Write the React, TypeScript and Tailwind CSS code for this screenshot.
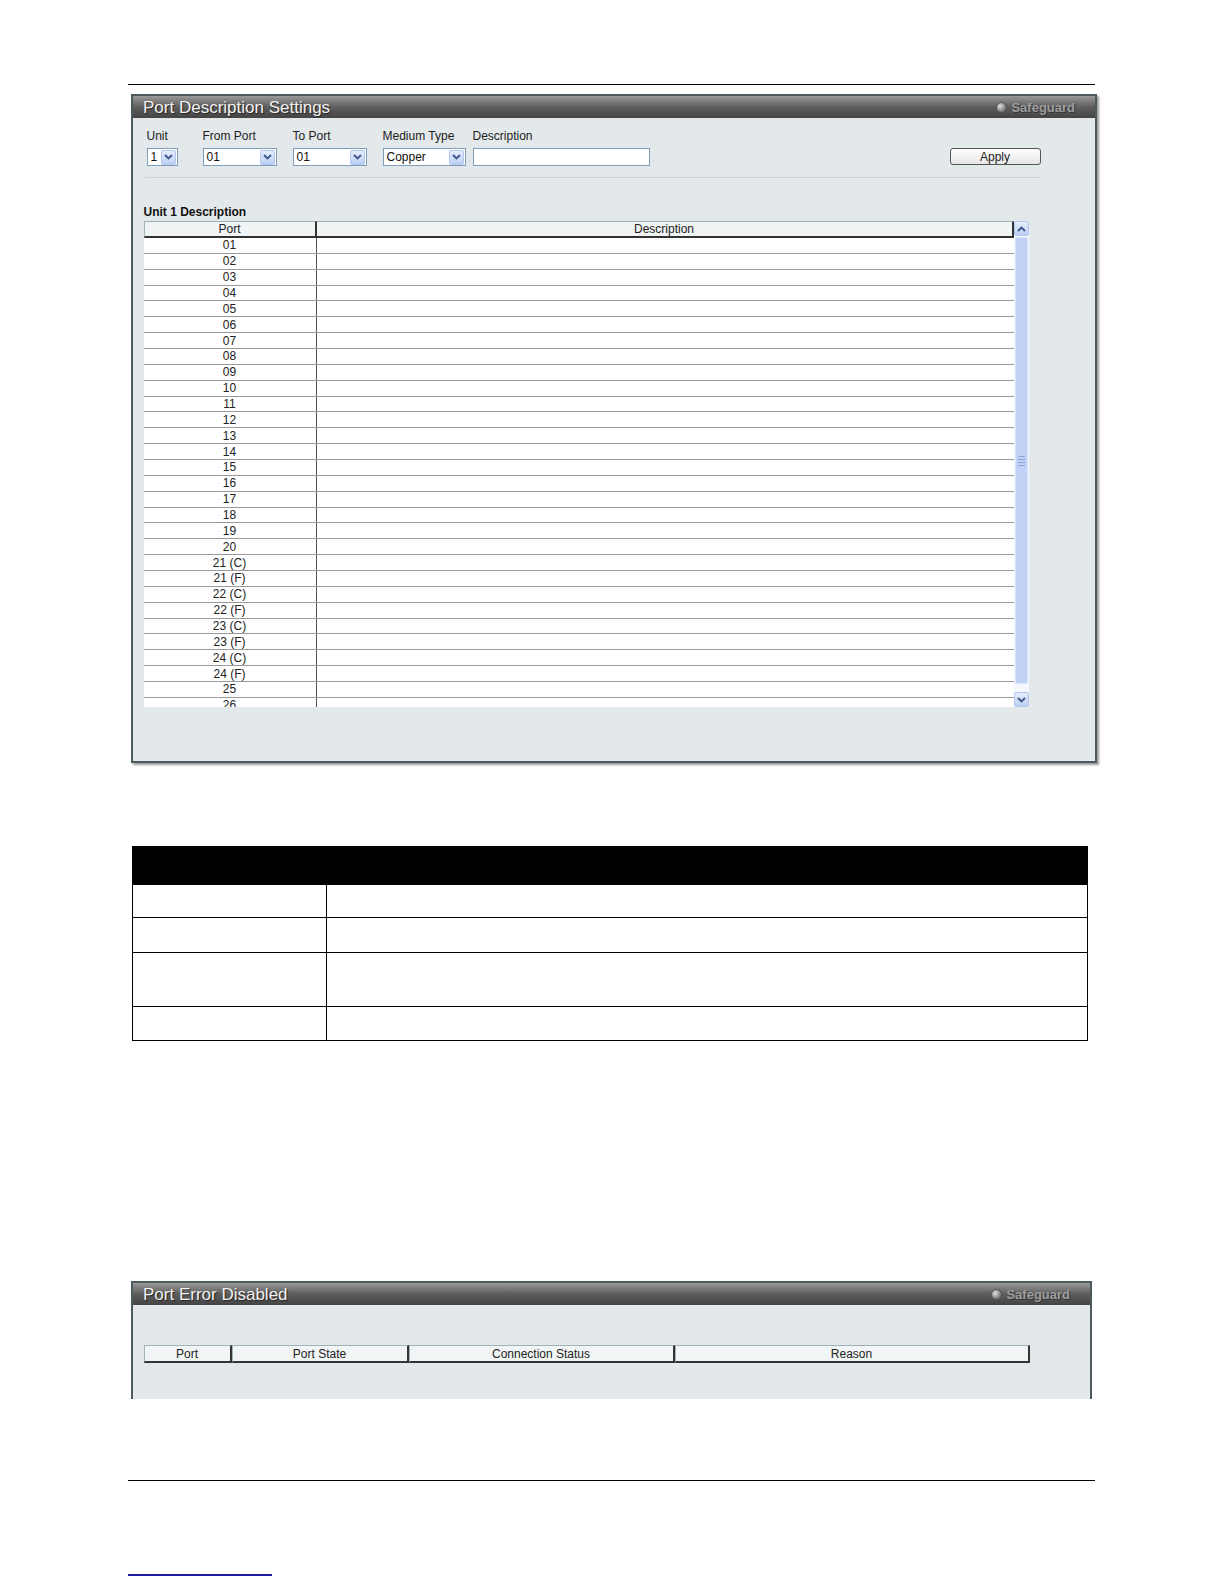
import React from "react";

const rows = [
  "01","02","03","04","05","06","07","08","09","10",
  "11","12","13","14","15","16","17","18","19","20",
  "21 (C)","21 (F)","22 (C)","22 (F)","23 (C)","23 (F)","24 (C)","24 (F)",
  "25","26",
];

function Chevron({ up }: { up?: boolean }) {
  return (
    <svg width="9" height="6" viewBox="0 0 9 6">
      <path
        d={up ? "M1 5 L4.5 1.5 L8 5" : "M1 1 L4.5 4.5 L8 1"}
        stroke="#3f5688"
        strokeWidth="1.8"
        fill="none"
      />
    </svg>
  );
}

function ArrowBox({ up }: { up?: boolean }) {
  return (
    <div className="w-[15px] h-[15px] shrink-0 flex items-center justify-center bg-gradient-to-b from-[#e6eefc] to-[#bccff4] border border-[#b3c6ee] rounded-[2px]">
      <Chevron up={up} />
    </div>
  );
}

function Select({ value, className }: { value: string; className: string }) {
  return (
    <div className={"flex items-center justify-between h-[18px] border border-[#7f9db9] bg-white pl-[3px] pr-px " + className}>
      <span className="text-[12px] leading-none text-[#111]">{value}</span>
      <ArrowBox />
    </div>
  );
}

function PanelHeader({ title }: { title: string }) {
  return (
    <div className="flex items-center justify-between h-[22px] bg-gradient-to-b from-[#9a9a9a] via-[#5e5e5e] to-[#444] pl-[10px] pr-[20px]">
      <span className="text-[17px] leading-none text-[#f2f2f2] [text-shadow:1px_1px_1px_#222]">{title}</span>
      <div className="flex items-center gap-[4px]">
        <span className="w-[11px] h-[11px] rounded-full bg-[radial-gradient(circle_at_35%_35%,#e0e0e0,#777_70%)] border border-[#555]" />
        <span className="text-[13px] font-bold leading-none text-[#9d9d9d] [text-shadow:1px_1px_0_#333]">Safeguard</span>
      </div>
    </div>
  );
}

function Label({ children }: { children: React.ReactNode }) {
  return <div className="text-[12px] leading-[14px] text-[#222] h-[14px] whitespace-nowrap">{children}</div>;
}

export default function App() {
  return (
    <div className="w-full bg-white font-['Liberation_Sans',Arial,sans-serif]">
      <div className="h-[84px]" />
      <div className="ml-[128px] w-[967px] h-px bg-black" />

      {/* Panel 1 */}
      <div className="mt-[9px] ml-[131px] w-[966px] h-[669px] border-2 border-[#4d5a5e] bg-[#e3e8ea] shadow-[2px_2px_2px_#9a9a9a] flex flex-col">
        <PanelHeader title="Port Description Settings" />
        <div className="pl-[10.5px] pt-[11px]">
          <div className="flex pl-[3px]">
            <div className="w-[56px]">
              <Label>Unit</Label>
              <Select value="1" className="mt-[5px] w-[31px]" />
            </div>
            <div className="w-[90px]">
              <Label>From Port</Label>
              <Select value="01" className="mt-[5px] w-[74px]" />
            </div>
            <div className="w-[90px]">
              <Label>To Port</Label>
              <Select value="01" className="mt-[5px] w-[74px]" />
            </div>
            <div className="w-[90px]">
              <Label>Medium Type</Label>
              <Select value="Copper" className="mt-[5px] w-[83px]" />
            </div>
            <div className="w-[177px]">
              <Label>Description</Label>
              <div className="mt-[5px] h-[18px] w-[177px] border border-[#7f9db9] bg-white" />
            </div>
            <div className="ml-[300px] pt-[19px]">
              <div className="w-[91px] h-[17px] border border-[#555] rounded-[3px] bg-gradient-to-b from-white to-[#e6e6e6] flex items-center justify-center text-[12px] leading-none text-[#222]">
                Apply
              </div>
            </div>
          </div>

          <div className="mt-[11px] ml-px w-[896px] h-px bg-[#cdd3d6]" />

          <div className="mt-[28px] text-[12px] font-bold leading-[13px] text-[#111]">Unit 1 Description</div>

          <div className="mt-[2px] flex w-[885px]">
            <div className="w-[870px] flex flex-col">
              <div className="flex h-[17px] bg-[#f1f4f4] text-[12px] leading-none text-[#222]">
                <div className="w-[173px] flex items-center justify-center border-t border-[#9fb2b6] border-b-2 border-b-[#333] border-r-2 border-r-[#333] border-l border-l-[#9fb2b6]">Port</div>
                <div className="flex-1 flex items-center justify-center border-t border-[#9fb2b6] border-b-2 border-b-[#333] border-r-2 border-r-[#333]">Description</div>
              </div>
              <div className="h-[469px] overflow-hidden bg-white">
                {rows.map((r) => (
                  <div key={r} className="flex h-[15.87px] border-b border-[#9a9a9a]">
                    <div className="w-[173px] flex items-center justify-center border-r border-[#555] text-[12px] leading-none text-[#222]">{r}</div>
                    <div className="flex-1" />
                  </div>
                ))}
              </div>
            </div>
            <div className="w-[15px] flex flex-col bg-[#f4f7fc]">
              <ArrowBox up />
              <div className="flex-1 mt-px mx-px bg-[#c1d2f6] border border-[#d9e3f8] rounded-[2px] flex items-center justify-center">
                <div className="flex flex-col gap-[2px]">
                  <div className="w-[7px] h-px bg-[#8ea6d8]" />
                  <div className="w-[7px] h-px bg-[#8ea6d8]" />
                  <div className="w-[7px] h-px bg-[#8ea6d8]" />
                  <div className="w-[7px] h-px bg-[#8ea6d8]" />
                </div>
              </div>
              <div className="h-[8px]" />
              <ArrowBox />
            </div>
          </div>
        </div>
      </div>

      {/* Parameter table */}
      <div className="mt-[83px] ml-[132px] w-[956px] border-x-[1.5px] border-black">
        <div className="h-[39px] bg-black" />
        <div className="flex h-[33px] border-b-[1.5px] border-black">
          <div className="w-[194px] border-r-[1.5px] border-black" />
          <div className="flex-1" />
        </div>
        <div className="flex h-[35px] border-b-[1.5px] border-black">
          <div className="w-[194px] border-r-[1.5px] border-black" />
          <div className="flex-1" />
        </div>
        <div className="flex h-[54px] border-b-[1.5px] border-black">
          <div className="w-[194px] border-r-[1.5px] border-black" />
          <div className="flex-1" />
        </div>
        <div className="flex h-[34px] border-b-[1.5px] border-black">
          <div className="w-[194px] border-r-[1.5px] border-black" />
          <div className="flex-1" />
        </div>
      </div>

      {/* Panel 2 */}
      <div className="mt-[240px] ml-[131px] w-[961px] h-[118px] border-x-2 border-t-2 border-[#4d5a5e] bg-[#e3e8ea] flex flex-col">
        <PanelHeader title="Port Error Disabled" />
        <div className="pt-[40px] pl-[10.5px]">
          <div className="flex h-[18px] text-[12px] leading-none text-[#222]">
            {[
              { t: "Port", w: "w-[88px]" },
              { t: "Port State", w: "w-[177px]" },
              { t: "Connection Status", w: "w-[266px]" },
              { t: "Reason", w: "w-[355px]" },
            ].map((c) => (
              <div
                key={c.t}
                className={"flex items-center justify-center bg-[#f2f5f5] border-t border-l border-[#9fb2b6] border-b-2 border-b-[#333] border-r-2 border-r-[#333] " + c.w}
              >
                {c.t}
              </div>
            ))}
          </div>
        </div>
      </div>

      <div className="mt-[81px] ml-[128px] w-[967px] h-px bg-black" />
      <div className="mt-[93px] ml-[128px] w-[144px] h-[2px] bg-[#1c1c9c]" />
    </div>
  );
}
